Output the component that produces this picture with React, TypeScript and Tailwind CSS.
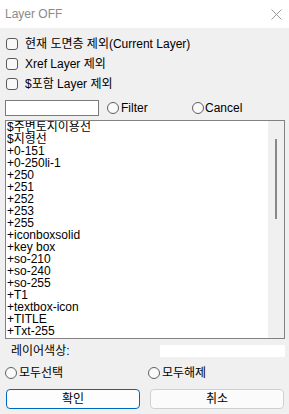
import React from 'react';

const layers = [
  '$주변토지이용선',
  '$지형선',
  '+0-151',
  '+0-250li-1',
  '+250',
  '+251',
  '+252',
  '+253',
  '+255',
  '+iconboxsolid',
  '+key box',
  '+so-210',
  '+so-240',
  '+so-255',
  '+T1',
  '+textbox-icon',
  '+TITLE',
  '+Txt-255'
];

const CheckRow = ({ label }: { label: string }) => (
  <div className="flex items-center h-[20px] pl-[6px]">
    <span className="w-[12px] h-[12px] border border-[#5a5a5a] rounded-[3px] bg-[#f8f8f8]" />
    <span className="ml-[7px] text-[12px] leading-[14px] text-black">{label}</span>
  </div>
);

const Radio = ({ label, gap = 'ml-[2px]' }: { label: string; gap?: string }) => (
  <div className="flex items-center">
    <span className="w-[12px] h-[12px] rounded-full border border-[#5f5f5f] bg-[#fafafa]" />
    <span className={`${gap} text-[12px] leading-[14px] text-black`}>{label}</span>
  </div>
);

export default function App() {
  return (
    <div
      className="w-[289px] h-[414px] bg-[#f0f0f0] overflow-hidden flex flex-col"
      style={{ fontFamily: '"Liberation Sans", "Noto Sans CJK KR", sans-serif' }}
    >
      {/* 타이틀 바 */}
      <div className="h-[28px] bg-white flex items-center justify-between pl-[5px] pr-[6px] shrink-0">
        <span className="text-[12px] text-[#8a8a8a]">Layer OFF</span>
        <svg width="11" height="11" viewBox="0 0 11 11" className="mr-[1px]">
          <path d="M0.5 0.5L10.5 10.5M10.5 0.5L0.5 10.5" stroke="#9a9a9a" strokeWidth="1" />
        </svg>
      </div>

      {/* 옵션 */}
      <div className="pt-[6px]">
        <CheckRow label="현재 도면층 제외(Current Layer)" />
        <CheckRow label="Xref Layer 제외" />
        <CheckRow label="$포함 Layer 제외" />
      </div>

      {/* 필터 */}
      <div className="flex items-center mt-[6px] pl-[5px] h-[16px]">
        <div className="w-[94px] h-[16px] bg-white border border-[#7a7a7a]" />
        <div className="ml-[8px] w-[85px]">
          <Radio label="Filter" />
        </div>
        <Radio label="Cancel" gap="ml-[1px]" />
      </div>

      {/* 레이어 목록 */}
      <div className="mt-[4px] ml-[5px] w-[280px] h-[219px] border border-[#828282] bg-white flex">
        <div className="flex-1 pl-[1px] overflow-hidden">
          {layers.map(name => (
            <div key={name} className="h-[12px] leading-[12px] text-[12px] text-black whitespace-nowrap">
              {name}
            </div>
          ))}
        </div>
        <div className="w-[16px] bg-[#f0f0f0] pt-[18px] flex justify-center">
          <div className="w-[2px] h-[80px] bg-[#888888]" />
        </div>
      </div>

      {/* 레이어 색상 */}
      <div className="flex items-center justify-between mt-[6px] h-[12px] pl-[11px] pr-[4px]">
        <span className="text-[12px] text-black leading-[14px]">레이어색상:</span>
        <div className="w-[125px] h-[12px] bg-white" />
      </div>

      {/* 선택 */}
      <div className="flex items-center mt-[9px] h-[13px] pl-[5px]">
        <div className="w-[143px]">
          <Radio label="모두선택" />
        </div>
        <Radio label="모두해제" />
      </div>

      {/* 버튼 */}
      <div className="flex mt-[10px] pl-[6px] gap-[10px]">
        <button className="w-[134px] h-[20px] rounded-[4px] border border-[#0067c0] bg-[#fdfdfd] text-[12px] text-black leading-none">
          확인
        </button>
        <button className="w-[134px] h-[20px] rounded-[4px] border border-[#d0d0d0] bg-[#fbfbfb] text-[12px] text-black leading-none">
          취소
        </button>
      </div>
    </div>
  );
}
